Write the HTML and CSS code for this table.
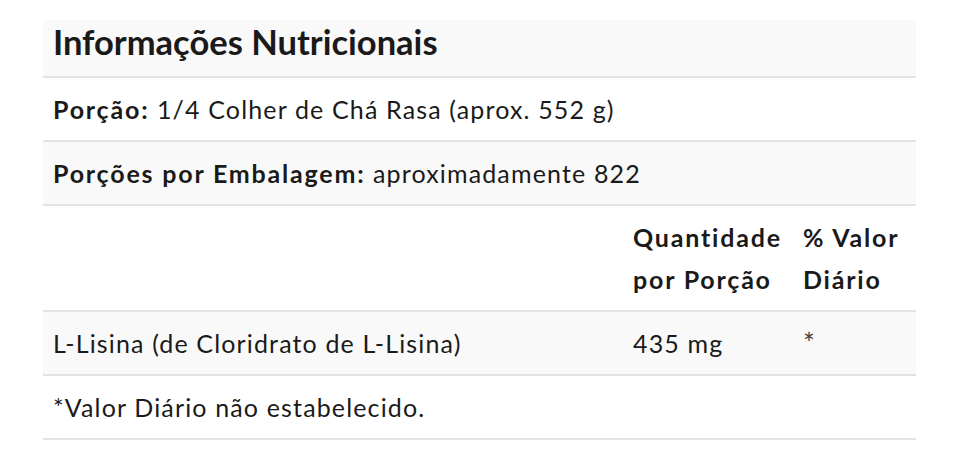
FILE: index.html
```html
<!DOCTYPE html>
<html lang="pt">
<head>
<meta charset="utf-8">
<link rel="stylesheet" href="styles.css">
</head>
<body>
<div class="facts">
  <div class="title">Informações Nutricionais</div>
  <div class="row"><b>Porção:</b> 1/4 Colher de Chá Rasa (aprox. 552 g)</div>
  <div class="row shade"><b>Porções por Embalagem:</b> aproximadamente 822</div>
  <div class="grid head">
    <div></div>
    <div class="hd">Quantidade por Porção</div>
    <div class="hd">% Valor Diário</div>
  </div>
  <div class="grid shade">
    <div>L-Lisina (de Cloridrato de L-Lisina)</div>
    <div>435 mg</div>
    <div class="star">*</div>
  </div>
  <div class="row">*Valor Diário não estabelecido.</div>
</div>
</body>
</html>
```
FILE: styles.css
```css
html, body {
  margin: 0;
  background: #fff;
}
body {
  padding: 20px 44px 0 43px;
  font-family: Lato, "Noto Sans", sans-serif;
  color: #1a1a1a;
}
.facts {
  width: 873px;
}
.title {
  background: #f9f9f9;
  font-size: 34.5px;
  font-weight: 700;
  line-height: 41px;
  padding: 1px 10px 14px;
  border-bottom: 2px solid #e3e3e3;
}
.row {
  font-size: 25px;
  letter-spacing: 1.15px;
  line-height: 42px;
  padding: 10px 10px;
  border-bottom: 2px solid #e3e3e3;
}
.row b, .hd {
  font-weight: 700;
  letter-spacing: 1.8px;
}
.shade {
  background: #f9f9f9;
}
.grid {
  display: grid;
  grid-template-columns: 580px 170px 1fr;
  font-size: 25px;
  letter-spacing: 1.15px;
  line-height: 42px;
  padding: 10px 10px;
  border-bottom: 2px solid #e3e3e3;
}
.star {
  color: #444;
  font-size: 28px;
}
```
